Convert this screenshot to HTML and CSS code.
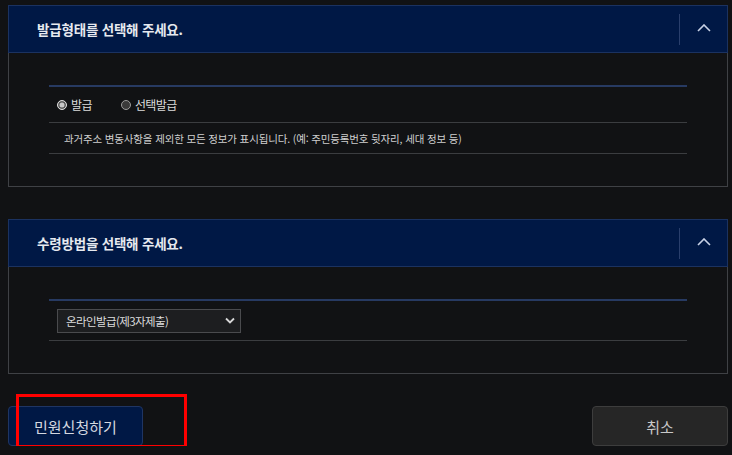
FILE: index.html
```html
<!DOCTYPE html>
<html lang="ko">
<head>
<meta charset="utf-8">
<link rel="stylesheet" href="styles.css">
</head>
<body>
<div class="page">
  <section class="panel">
    <div class="panel-head">
      <h2 class="panel-title">발급형태를 선택해 주세요.</h2>
      <div class="toggle">
        <svg width="14" height="8" viewBox="0 0 14 8"><path d="M1 7 L7 1 L13 7" fill="none" stroke="#c9d2e6" stroke-width="1.6"/></svg>
      </div>
    </div>
    <div class="panel-body">
      <div class="form-table">
        <div class="row radio-row">
          <label class="radio"><span class="dot checked"></span>발급</label>
          <label class="radio"><span class="dot"></span>선택발급</label>
        </div>
        <div class="row info-row">과거주소 변동사항을 제외한 모든 정보가 표시됩니다. (예: 주민등록번호 뒷자리, 세대 정보 등)</div>
      </div>
    </div>
  </section>

  <section class="panel">
    <div class="panel-head">
      <h2 class="panel-title">수령방법을 선택해 주세요.</h2>
      <div class="toggle">
        <svg width="14" height="8" viewBox="0 0 14 8"><path d="M1 7 L7 1 L13 7" fill="none" stroke="#c9d2e6" stroke-width="1.6"/></svg>
      </div>
    </div>
    <div class="panel-body">
      <div class="form-table">
        <div class="row select-row">
          <div class="select">
            <span>온라인발급(제3자제출)</span>
            <svg width="10" height="7" viewBox="0 0 10 7"><path d="M1 1.5 L5 5.5 L9 1.5" fill="none" stroke="#d8d8d8" stroke-width="1.8"/></svg>
          </div>
        </div>
      </div>
    </div>
  </section>

  <div class="actions">
    <button class="btn btn-primary">민원신청하기</button>
    <button class="btn btn-cancel">취소</button>
    <div class="highlight"></div>
  </div>
</div>
</body>
</html>
```

FILE: styles.css
```css
* { box-sizing: border-box; }
html, body { margin: 0; padding: 0; background: #111214; }
body {
  font-family: "Noto Sans CJK KR", "Noto Sans", sans-serif;
  color: #d6d6d6;
}
.page {
  padding: 5px 4px 0 8px;
  display: flex;
  flex-direction: column;
  gap: 32px;
}
.panel {
  border: 1px solid #3f4145;
  background: #111214;
}
.panel-head {
  height: 48px;
  margin: -1px -1px 0 -1px;
  background: #001845;
  border: 1px solid #1b3260;
  display: flex;
  align-items: center;
  justify-content: space-between;
}
.panel-title {
  margin: 0 0 0 28px;
  font-size: 13.5px;
  font-weight: 700;
  letter-spacing: -0.2px;
  color: #e6e9ef;
}
.toggle {
  width: 48px;
  height: 31px;
  border-left: 1px solid #2a3f6c;
  display: flex;
  align-items: center;
  justify-content: center;
}
.toggle svg { margin-top: -2px; }
.panel-body {
  padding: 32px 40px 32px 40px;
}
.form-table {
  border-top: 2px solid #273a62;
}
.row {
  border-bottom: 1px solid #3b3d40;
  display: flex;
  align-items: center;
}
.radio-row {
  height: 36px;
  padding-left: 8px;
  gap: 29px;
  font-size: 12px;
  letter-spacing: -0.6px;
}
.radio {
  display: flex;
  align-items: center;
  gap: 4px;
  color: #dcdcdc;
}
.dot {
  width: 10px;
  height: 10px;
  border-radius: 50%;
  background: #3a3a3a;
  border: 1px solid #9a9a9a;
  display: inline-block;
}
.dot.checked {
  background: #c8c8c8;
  border: 1px solid #dcdcdc;
  box-shadow: inset 0 0 0 1.5px #555;
}
.info-row {
  height: 31px;
  padding-left: 15px;
  font-size: 10.5px;
  letter-spacing: -0.15px;
  color: #cfcfcf;
}
.select-row {
  height: 40px;
  padding-left: 8px;
}
.select {
  width: 184px;
  height: 24px;
  background: #1d1e20;
  border: 1px solid #4a4b4e;
  display: flex;
  align-items: center;
  justify-content: space-between;
  padding: 0 5px 0 8px;
  font-size: 11.5px;
  letter-spacing: -0.6px;
  color: #dcdcdc;
}
.actions {
  position: relative;
  display: flex;
  justify-content: space-between;
}
.btn {
  height: 40px;
  border-radius: 4px;
  font-family: "Noto Sans CJK KR", "Noto Sans", sans-serif;
  font-size: 15px;
  cursor: pointer;
}
.btn-primary {
  width: 135px;
  background: #001845;
  border: 1px solid #1f3563;
  color: #d4d8e0;
  text-align: left;
  padding-left: 25px;
}
.btn-cancel {
  width: 136px;
  background: #262626;
  border: 1px solid #3d3d3d;
  color: #c9c9c9;
}
.highlight {
  position: absolute;
  left: 8px;
  top: -12px;
  width: 171px;
  height: 54px;
  border: 3px solid #ff0000;
  pointer-events: none;
}
```
